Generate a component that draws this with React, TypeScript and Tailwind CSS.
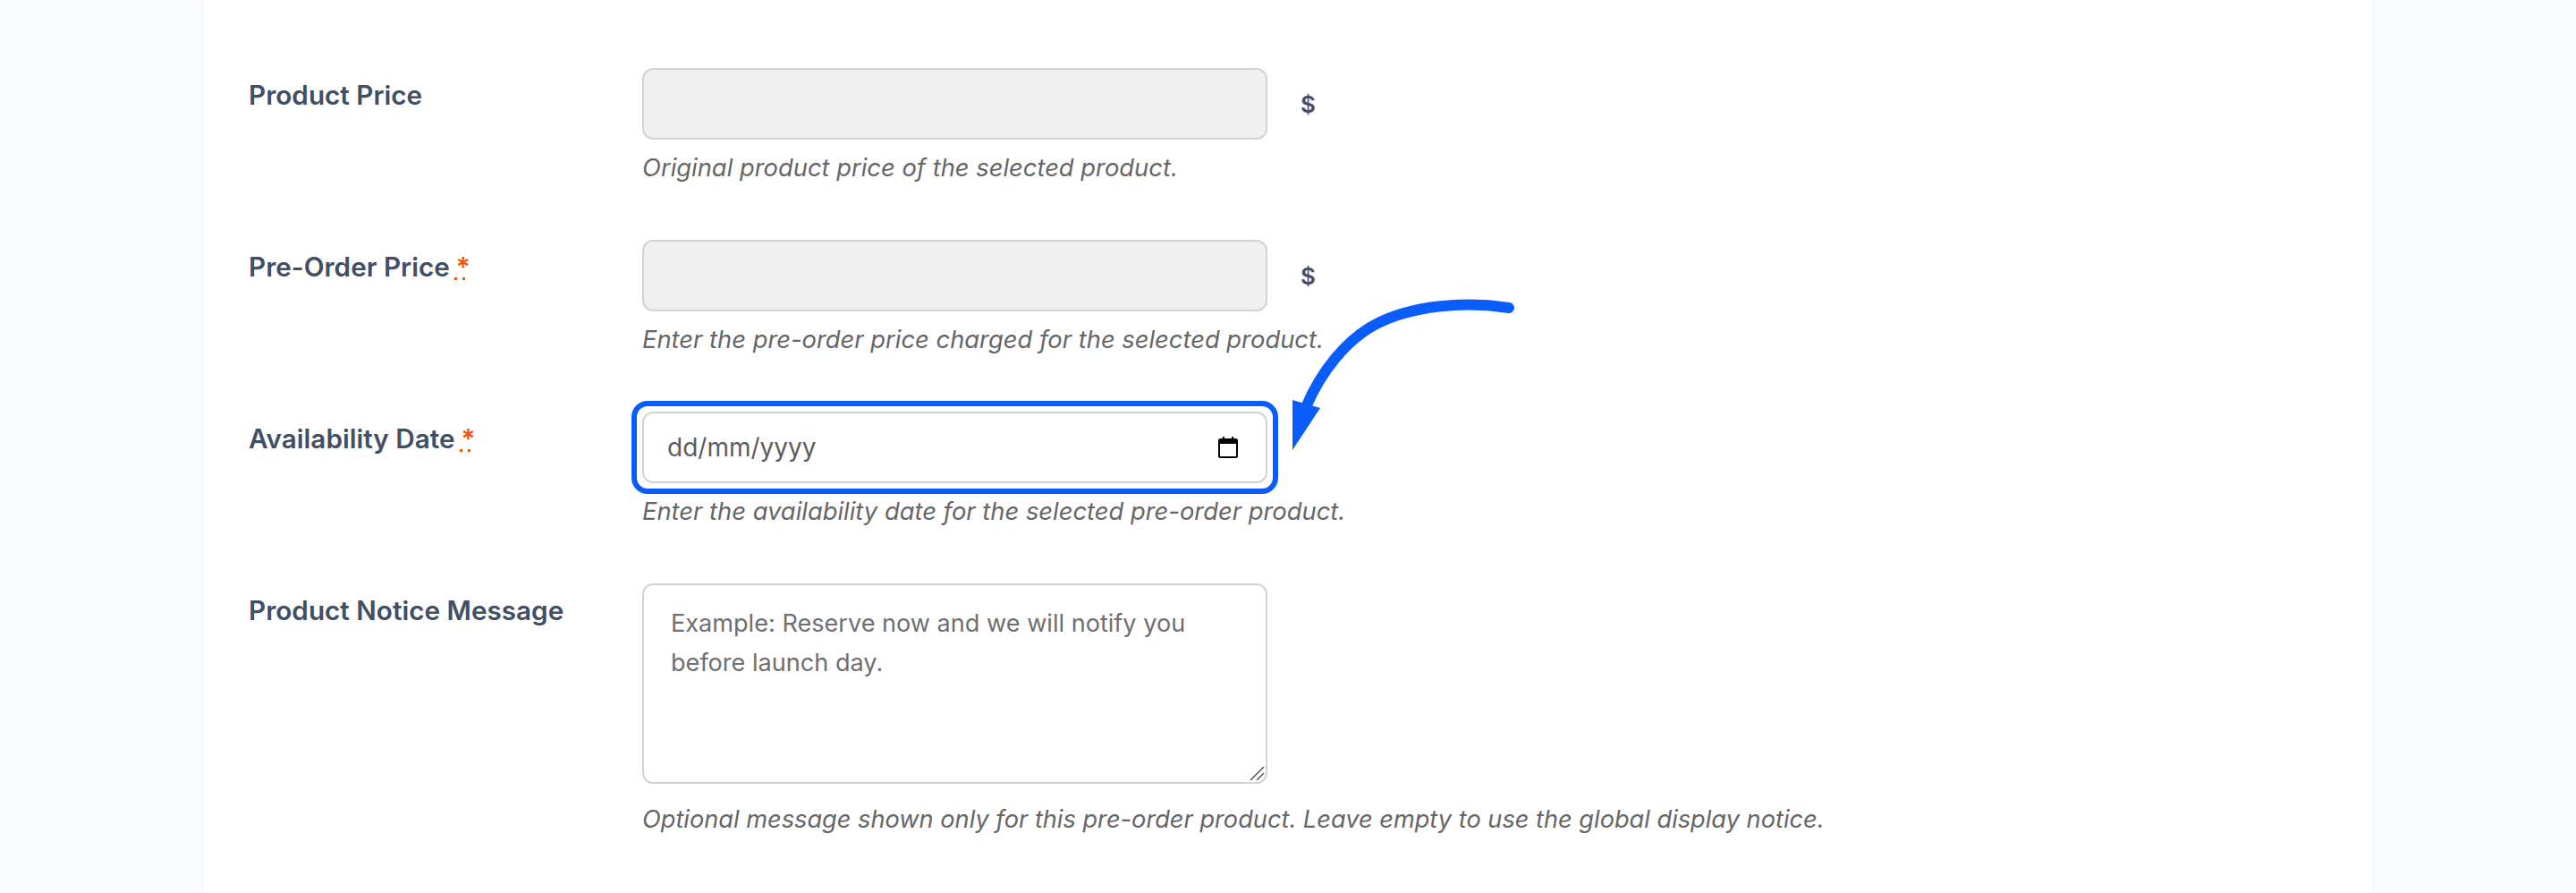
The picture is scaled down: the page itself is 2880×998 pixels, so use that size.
const font = "[font-family:Inter,'Liberation_Sans',sans-serif]";

function Req() {
  return (
    <abbr title="required" className="relative ml-[7px] text-[#f2570b] no-underline">
      *
      <span className="absolute bottom-[3px] -left-[2px] flex gap-[6px]">
        <span className="h-[3px] w-[3px] bg-[#f2570b]" />
        <span className="h-[3px] w-[3px] bg-[#f2570b]" />
      </span>
    </abbr>
  );
}

function Label({ text, req }: { text: string; req?: boolean }) {
  return (
    <div className="w-[440px] shrink-0 pt-2 text-[29.7px] leading-[44px] font-semibold text-[#424e64]">
      {text}
      {req && <Req />}
    </div>
  );
}

function Help({ text, className }: { text: string; className: string }) {
  return <p className={`leading-[44px] italic text-[#666666] ${className}`}>{text}</p>;
}

function CalendarIcon() {
  return (
    <svg width="22" height="24" viewBox="0 0 22 24" className="shrink-0" aria-hidden="true">
      <path
        d="M5 0h2v2h8V0h2v2h2.5A2.5 2.5 0 0 1 22 4.5v17a2.5 2.5 0 0 1-2.5 2.5h-17A2.5 2.5 0 0 1 0 21.5v-17A2.5 2.5 0 0 1 2.5 2H5V0zM2 8v13.5a.5.5 0 0 0 .5.5h17a.5.5 0 0 0 .5-.5V8H2z"
        fill="#000"
      />
    </svg>
  );
}

function Arrow() {
  return (
    <svg
      className="absolute left-[1440px] top-[330px] pointer-events-none"
      width="260"
      height="180"
      viewBox="0 0 260 180"
      aria-hidden="true"
    >
      <path
        d="M247 14 C 200 7, 140 10, 97 33 C 65 50, 37 85, 20 125"
        fill="none"
        stroke="#0a5cfb"
        strokeWidth="12"
        strokeLinecap="round"
      />
      <polygon points="5,117 36,126 5,173" fill="#0a5cfb" />
    </svg>
  );
}

export default function App() {
  return (
    <div className={`relative h-[998px] overflow-hidden bg-[#fafbfd] ${font}`}>
      <div className="mx-[228px] h-full bg-white pl-[50px] pt-[76px] shadow-[0_0_10px_rgba(0,0,0,0.025)]">
        <div className="flex flex-col gap-[58px]">
          <div className="flex">
            <Label text="Product Price" />
            <div>
              <div className="flex items-center">
                <input disabled className="h-20 w-[699px] rounded-[12px] border-2 border-[#d3d3d3] bg-[#f0f0f0]" />
                <span className="ml-[37px] text-[26px] font-semibold text-[#424e64]">$</span>
              </div>
              <Help text="Original product price of the selected product." className="mt-2.5 text-[27.35px]" />
            </div>
          </div>

          <div className="flex">
            <Label text="Pre-Order Price" req />
            <div>
              <div className="flex items-center">
                <input disabled className="h-20 w-[699px] rounded-[12px] border-2 border-[#d3d3d3] bg-[#f0f0f0]" />
                <span className="ml-[37px] text-[26px] font-semibold text-[#424e64]">$</span>
              </div>
              <Help text="Enter the pre-order price charged for the selected product." className="mt-2.5 text-[27.35px]" />
            </div>
          </div>

          <div className="flex">
            <Label text="Availability Date" req />
            <div>
              <div className="relative w-[699px]">
                <div className="flex h-20 items-center justify-between rounded-[12px] border-2 border-[#d3d3d3] bg-white pl-[26px] pr-[31px]">
                  <span className="text-[28px] text-[#5c5c5c]">dd/mm/yyyy</span>
                  <CalendarIcon />
                </div>
                <div className="absolute -inset-3 rounded-[18px] border-[6px] border-[#0a5cfb]" />
              </div>
              <Help text="Enter the availability date for the selected pre-order product." className="mt-2.5 text-[27.35px]" />
            </div>
          </div>

          <div className="flex">
            <Label text="Product Notice Message" />
            <div>
              <div className="relative w-[699px]">
                <textarea
                  rows={5}
                  placeholder="Example: Reserve now and we will notify you before launch day."
                  className="block h-[224px] w-[699px] resize-none rounded-[12px] border-2 border-[#d3d3d3] bg-white pl-[30px] pr-[50px] py-[21px] text-[27.1px] leading-[44px] placeholder:text-[#6f6f6f]"
                />
                <svg
                  className="absolute bottom-[3px] right-[2px] pointer-events-none"
                  width="18"
                  height="18"
                  viewBox="0 0 18 18"
                  aria-hidden="true"
                >
                  <path d="M1 17 L16 2 M8 17 L16 9" stroke="#555555" strokeWidth="1.5" fill="none" />
                </svg>
              </div>
              <Help
                text="Optional message shown only for this pre-order product. Leave empty to use the global display notice."
                className="mt-[18px] text-[27.2px]"
              />
            </div>
          </div>
        </div>
      </div>
      <Arrow />
    </div>
  );
}
